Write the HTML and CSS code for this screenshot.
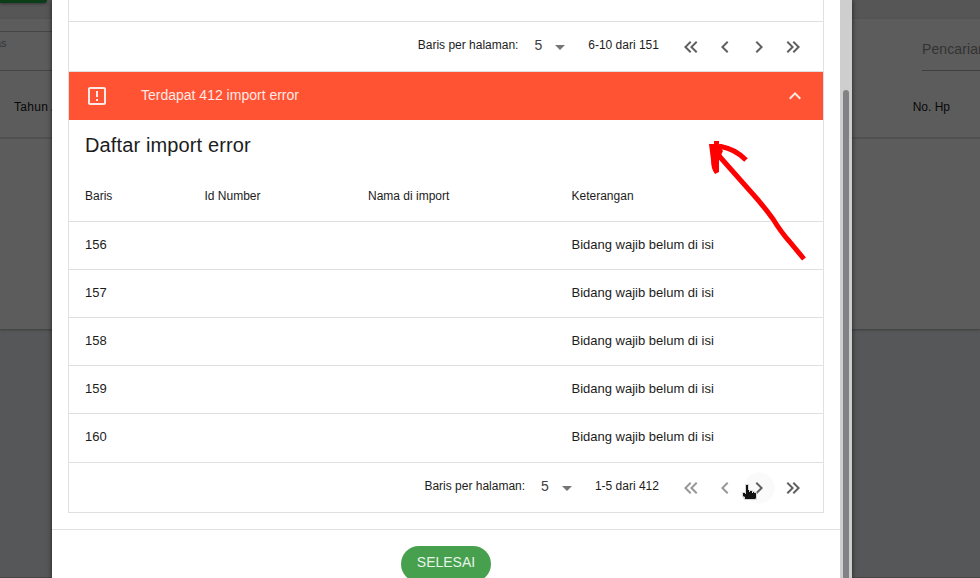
FILE: index.html
```html
<!DOCTYPE html>
<html lang="id">
<head>
<meta charset="utf-8">
<title>Import</title>
<link rel="stylesheet" href="styles.css">
</head>
<body>
<svg class="defs" width="0" height="0">
  <symbol id="prev" viewBox="0 0 24 24"><path d="M15.41 16.58L10.83 12l4.58-4.59L14 6l-6 6 6 6z"/></symbol>
  <symbol id="next" viewBox="0 0 24 24"><path d="M8.59 16.58L13.17 12 8.59 7.41 10 6l6 6-6 6z"/></symbol>
  <symbol id="first" viewBox="0 0 24 24"><path d="M18.41 7.41L17 6l-6 6 6 6 1.41-1.41L13.83 12zM12.41 7.41L11 6l-6 6 6 6 1.41-1.41L7.83 12z"/></symbol>
  <symbol id="last" viewBox="0 0 24 24"><path d="M5.59 7.41L7 6l6 6-6 6-1.41-1.41L10.17 12zM11.59 7.41L13 6l6 6-6 6-1.41-1.41L16.17 12z"/></symbol>
  <symbol id="down" viewBox="0 0 24 24"><path d="M7 10l5 5 5-5z"/></symbol>
</svg>
<main class="page">
  <div class="toolbar"><span class="add"></span></div>
  <section class="card">
    <div class="filters">
      <div class="field"><span class="label">as</span></div>
      <div class="search"><span class="hint">Pencarian</span></div>
    </div>
    <div class="columns"><span class="year">Tahun A</span><span class="phone">No. Hp</span></div>
  </section>
</main>
<div class="dialog">
  <div class="content">
    <div class="panels">
      <div class="previous"></div>
      <div class="pager top">
        <span class="per">Baris per halaman:</span><span class="size">5</span><svg class="drop"><use href="#down"/></svg><span class="range">6-10 dari 151</span>
        <svg class="nav"><use href="#first"/></svg><svg class="nav"><use href="#prev"/></svg><svg class="nav"><use href="#next"/></svg><svg class="nav"><use href="#last"/></svg>
      </div>
      <div class="alert">
        <svg class="warn" viewBox="0 0 24 24"><path d="M11 15h2v2h-2zm0-8h2v6h-2zm8-4H5c-1.100 0-2 .9-2 2v14c0 1.100.9 2 2 2h14c1.100 0 2-.9 2-2V5c0-1.100-.9-2-2-2zm0 16H5V5h14z"/></svg>
        <span class="message">Terdapat 412 import error</span>
        <svg class="collapse" viewBox="0 0 24 24"><path d="M7.410 15.410L12 10.830l4.590 4.580L18 14l-6-6-6 6z"/></svg>
      </div>
      <h2 class="title">Daftar import error</h2>
      <div class="row head"><span>Baris</span><span>Id Number</span><span>Nama di import</span><span>Keterangan</span></div>
      <div class="row"><span>156</span><span></span><span></span><span class="note">Bidang wajib belum di isi</span></div>
      <div class="row"><span>157</span><span></span><span></span><span class="note">Bidang wajib belum di isi</span></div>
      <div class="row"><span>158</span><span></span><span></span><span class="note">Bidang wajib belum di isi</span></div>
      <div class="row"><span>159</span><span></span><span></span><span class="note">Bidang wajib belum di isi</span></div>
      <div class="row final"><span>160</span><span></span><span></span><span class="note">Bidang wajib belum di isi</span></div>
      <div class="pager bottom">
        <span class="per">Baris per halaman:</span><span class="size">5</span><svg class="drop"><use href="#down"/></svg><span class="range">1-5 dari 412</span>
        <svg class="nav off"><use href="#first"/></svg><svg class="nav off"><use href="#prev"/></svg><span class="hover"><svg class="nav"><use href="#next"/></svg></span><svg class="nav"><use href="#last"/></svg>
      </div>
    </div>
    <div class="actions"><button class="done">SELESAI</button></div>
  </div>
  <div class="scrollbar"><div class="thumb"></div></div>
</div>
<svg class="arrow" viewBox="705 135 110 130" width="110" height="130">
  <path class="stroke" d="M804 259L789 241Q781 232 773 219Q762 204 751 192L720 157L715 147"/>
  <path class="stroke" d="M711 147L721 146.500Q735 149 746 160"/>
  <path class="fill" d="M709 144h5v-3h5v4l4 6-4 8v13l-4 2q-4-5-4-14z"/>
</svg>
<svg class="cursor" viewBox="0 0 16 18" width="16" height="18">
  <path class="rim" d="M4 1h2v6h4l4 2v6H3L1 12V9h3z"/>
  <path class="hand" d="M4 1h2v5h1v2h1V7h2v2h1V8h1v1h2v5l-1 1H3v-2L1 12V9h2v1h1z"/>
</svg>
</body>
</html>
```
FILE: styles.css
```css
* { box-sizing: border-box; }
body { margin: 0; width: 980px; height: 578px; overflow: hidden; position: relative; background: #565758; font-family: "Liberation Sans", Arial, sans-serif; color: #1c1c1c; }
.defs { position: absolute; }
svg { display: block; fill: currentColor; flex: none; }
.page { height: 578px; border-bottom: 1px solid #454545; }
.toolbar { height: 19px; background: #565656; }
.add { display: block; width: 47px; height: 3px; background: #0b3d18; border-radius: 0 0 12px 0; box-shadow: 0 1px 3px #333; }
.card { height: 310px; background: #5c5c5c; box-shadow: 0 1px 2px #3c3c3c; }
.filters { height: 52px; display: flex; justify-content: space-between; }
.field { width: 60px; height: 40px; margin-top: 12px; border: solid #454545; border-width: 1px 0; }
.label { display: block; font-size: 11px; line-height: 12px; margin: 5px 0 0 -5px; color: #353535; }
.search { width: 58px; border-bottom: 1px solid #404040; }
.hint { display: block; font-size: 14px; letter-spacing: .1px; line-height: 18px; margin-top: 21px; color: #333; }
.columns { height: 68px; border-bottom: 2px solid #505050; display: flex; justify-content: space-between; align-items: center; padding: 6px 30px 0 14px; font-size: 12px; color: #080808; }
.year { letter-spacing: .3px; }
.dialog { position: absolute; left: 52px; top: 0; width: 800px; height: 578px; display: flex; background: #fff; box-shadow: 0 0 5px rgba(0,0,0,.65); }
.content { width: 788px; }
.panels { margin: 0 16px; height: 513px; border: solid #e0e0e0; border-width: 0 1px 1px; }
.previous { height: 22px; border-bottom: 1px solid #e0e0e0; }
.pager { height: 50px; border-bottom: 1px solid #e0e0e0; display: flex; align-items: center; justify-content: flex-end; padding-right: 18.500px; font-size: 12px; white-space: nowrap; }
.per, .range { position: relative; top: -1px; }
.top .per, .top .range, .top .size { top: -2px; }
.size { font-size: 14px; margin-left: 16px; color: #404040; position: relative; top: -1px; }
.drop { width: 24px; height: 24px; margin-left: 6px; color: #757575; }
.range { margin: 0 20.500px 0 16px; }
.nav { width: 24px; height: 24px; margin-right: 9.700px; color: #606060; }
.nav:last-child { margin-right: 0; }
.off { color: #979797; }
.hover { width: 33.700px; height: 34px; background: radial-gradient(circle at 12px 17px, #fafafa 15px, transparent 16px); display: flex; align-items: center; }
.hover .nav { margin: 0; }
.alert { height: 48px; background: #ff5334; color: #ffe9e4; display: flex; align-items: center; padding: 0 16px 0 16px; }
.warn { width: 24px; height: 24px; }
.message { font-size: 14px; margin-left: 32px; flex: 1; position: relative; top: -1px; }
.collapse { width: 24px; height: 24px; }
.title { margin: 0; height: 52px; padding: 13px 16px 0; font-size: 20px; letter-spacing: .13px; line-height: 24px; font-weight: 400; }
.row { height: 48px; display: grid; grid-template-columns: 119.500px 163.500px 203.500px 1fr; align-items: center; padding: 0 0 2px 16px; border-bottom: 1px solid #e0e0e0; font-size: 13px; white-space: nowrap; }
.head { height: 50px; font-size: 12px; }
.final { height: 49px; padding-bottom: 3px; }
.bottom { border-bottom: 0; }
.bottom .per, .bottom .range, .bottom .size { top: -2px; }
.actions { margin-top: 16px; border-top: 1px solid #e0e0e0; padding-top: 16px; display: flex; justify-content: center; }
.done { width: 90px; height: 36px; border: 0; border-radius: 18px; padding: 0 0 4px; background: #46a04e; color: #e7f4e8; font: 14px "Liberation Sans", sans-serif; }
.scrollbar { width: 12px; background: #cecece; padding: 90px 2px 0 3px; }
.thumb { height: 500px; width: 6px; border-radius: 3px; background: #808284; }
.arrow { position: absolute; left: 705px; top: 135px; }
.stroke { fill: none; stroke: #f00; stroke-width: 5; }
.fill { fill: #f00; }
.cursor { position: absolute; left: 742px; top: 484px; }
.rim { fill: #fff; stroke: #d8d8d8; stroke-width: 2; }
.hand { fill: #111; }
```
